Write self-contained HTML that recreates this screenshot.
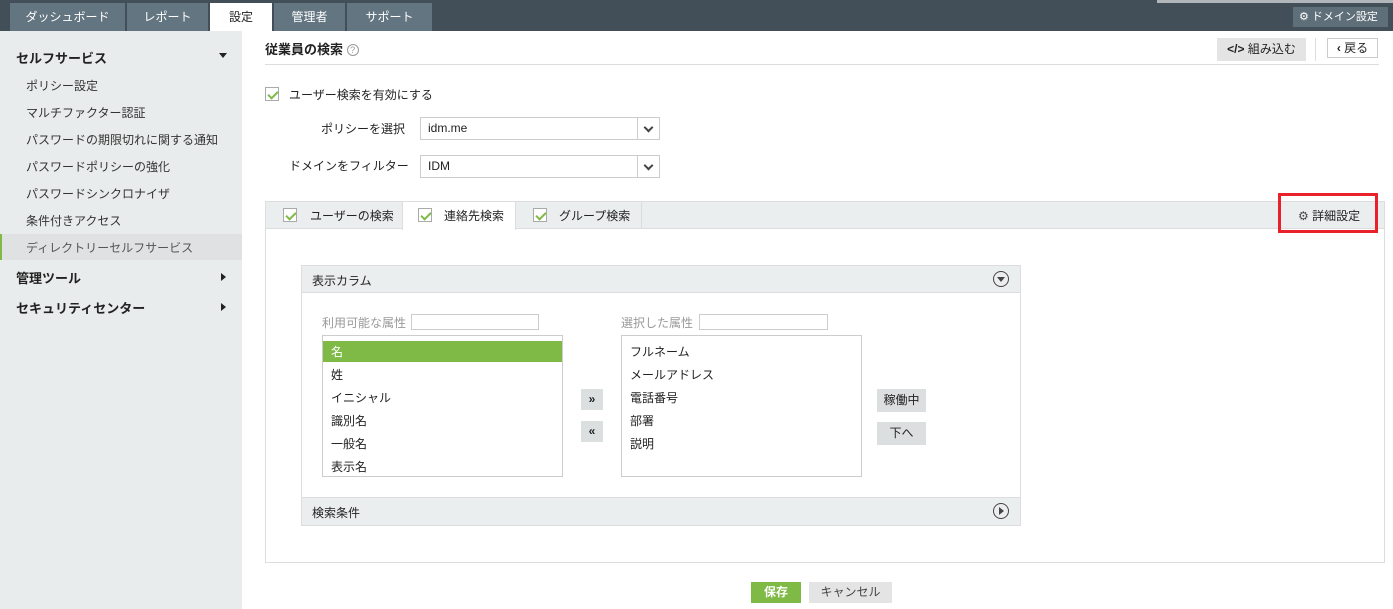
<!DOCTYPE html>
<html><head><meta charset="utf-8"><style>
*{box-sizing:border-box;margin:0;padding:0}
body{width:1393px;height:609px;position:relative;overflow:hidden;background:#fff;font-family:"Liberation Sans","Noto Sans CJK JP",sans-serif;font-size:12px;color:#222}
.a{position:absolute}
.tab{position:absolute;top:3px;height:28px;background:#627580;color:#fff;font-size:12px;line-height:28px;text-align:center}
.side{position:absolute;left:26px;font-size:12px;color:#333}
.cb{position:absolute;width:14px;height:14px;border:1px solid #aaa;background:#fff}
.cb:after{content:"";position:absolute;left:4px;top:1px;width:4px;height:8px;border:solid #7fba47;border-width:0 2px 2px 0;transform:rotate(45deg)}
.sel{position:absolute;height:23px;border:1px solid #ccc;background:#fff;padding-left:7px;line-height:21px;font-size:12px}
.sel .ar{position:absolute;right:0;top:0;width:22px;height:21px;border-left:1px solid #ccc}
.sel .ar:after{content:"";position:absolute;left:7px;top:6px;width:5px;height:5px;border:solid #444;border-width:0 2px 2px 0;transform:rotate(45deg)}
.li{position:absolute;left:8px;font-size:12px;color:#222}
.btn{position:absolute;background:#dcdfe0;text-align:center;font-size:12px}
</style></head><body>
<div class="a" style="left:0;top:0;width:1393px;height:31px;background:#434f58"></div>
<div class="a" style="left:1157px;top:0;width:236px;height:3px;background:#b0b6ba"></div>
<div class="tab" style="left:10px;width:115px">ダッシュボード</div>
<div class="tab" style="left:127px;width:81px">レポート</div>
<div class="tab" style="left:210px;width:62px;background:#fff;color:#222">設定</div>
<div class="tab" style="left:274px;width:71px">管理者</div>
<div class="tab" style="left:347px;width:85px">サポート</div>
<div class="a" style="left:1293px;top:7px;width:95px;height:20px;background:#5f6f79;color:#fff;font-size:11px;line-height:20px;padding-left:6px">⚙ ドメイン設定</div>

<div class="a" style="left:0;top:31px;width:242px;height:578px;background:#e9ecec"></div>
<div class="a" style="left:16px;top:48px;font-weight:bold;font-size:13px">セルフサービス</div>
<div class="a" style="left:219px;top:53px;border:4px solid transparent;border-top:5px solid #222;border-bottom:0"></div>
<div class="side" style="top:77px">ポリシー設定</div>
<div class="side" style="top:104px">マルチファクター認証</div>
<div class="side" style="top:131px">パスワードの期限切れに関する通知</div>
<div class="side" style="top:158px">パスワードポリシーの強化</div>
<div class="side" style="top:185px">パスワードシンクロナイザ</div>
<div class="side" style="top:212px">条件付きアクセス</div>
<div class="a" style="left:0;top:234px;width:242px;height:26px;background:#dfe1e2;border-left:2px solid #7fba47"></div>
<div class="side" style="top:239px;color:#555">ディレクトリーセルフサービス</div>
<div class="a" style="left:16px;top:268px;font-weight:bold;font-size:13px">管理ツール</div>
<div class="a" style="left:221px;top:273px;border:4px solid transparent;border-left:5px solid #222;border-right:0"></div>
<div class="a" style="left:16px;top:298px;font-weight:bold;font-size:13px">セキュリティセンター</div>
<div class="a" style="left:221px;top:303px;border:4px solid transparent;border-left:5px solid #222;border-right:0"></div>

<div class="a" style="left:265px;top:39px;font-weight:bold;font-size:13px">従業員の検索 <span style="display:inline-block;width:12px;height:12px;border:1px solid #999;border-radius:50%;font-size:9px;line-height:10px;text-align:center;color:#999;font-weight:normal;vertical-align:1px">?</span></div>
<div class="a" style="left:265px;top:64px;width:1114px;height:1px;background:#ddd"></div>
<div class="a" style="left:1217px;top:38px;width:89px;height:23px;background:#e4e4e4;line-height:23px;text-align:center;font-size:12px"><b>&lt;/&gt;</b> 組み込む</div>
<div class="a" style="left:1315px;top:38px;width:1px;height:23px;background:#ddd"></div>
<div class="a" style="left:1327px;top:38px;width:51px;height:20px;border:1px solid #ccc;line-height:18px;text-align:center;font-size:12px"><b>‹</b> 戻る</div>

<div class="cb" style="left:265px;top:87px"></div>
<div class="a" style="left:289px;top:86px">ユーザー検索を有効にする</div>
<div class="a" style="left:321px;top:120px">ポリシーを選択</div>
<div class="sel" style="left:420px;top:117px;width:240px">idm.me<div class="ar"></div></div>
<div class="a" style="left:289px;top:157px">ドメインをフィルター</div>
<div class="sel" style="left:420px;top:155px;width:240px">IDM<div class="ar"></div></div>

<div class="a" style="left:265px;top:201px;width:1120px;height:362px;border:1px solid #ddd"></div>
<div class="a" style="left:266px;top:202px;width:1118px;height:27px;background:#ebeeef;border-bottom:1px solid #ddd"></div>
<div class="cb" style="left:283px;top:208px"></div><div class="a" style="left:310px;top:207px">ユーザーの検索</div>
<div class="a" style="left:402px;top:202px;width:114px;height:28px;background:#fff;border-left:1px solid #ddd;border-right:1px solid #ddd"></div>
<div class="cb" style="left:418px;top:208px"></div><div class="a" style="left:444px;top:207px">連絡先検索</div>
<div class="a" style="left:641px;top:202px;width:1px;height:27px;background:#ddd"></div>
<div class="cb" style="left:533px;top:208px"></div><div class="a" style="left:559px;top:207px">グループ検索</div>
<div class="a" style="left:1298px;top:207px;font-size:12px"><span style="color:#444">⚙</span> 詳細設定</div>
<div class="a" style="left:1278px;top:193px;width:100px;height:40px;border:3px solid #e8212a"></div>

<div class="a" style="left:301px;top:265px;width:720px;height:261px;border:1px solid #ddd"></div>
<div class="a" style="left:302px;top:266px;width:718px;height:27px;background:#ebeeef;border-bottom:1px solid #ddd"></div>
<div class="a" style="left:312px;top:272px">表示カラム</div>
<div class="a" style="left:993px;top:271px;width:16px;height:16px;border:1.5px solid #444;border-radius:50%"><div class="a" style="left:3px;top:5px;border:4px solid transparent;border-top:5px solid #444;border-bottom:0"></div></div>
<div class="a" style="left:302px;top:497px;width:718px;height:28px;background:#ebeeef;border-top:1px solid #ddd"></div>
<div class="a" style="left:312px;top:504px">検索条件</div>
<div class="a" style="left:993px;top:503px;width:16px;height:16px;border:1.5px solid #444;border-radius:50%"><div class="a" style="left:5px;top:3px;border:4px solid transparent;border-left:5px solid #444;border-right:0"></div></div>

<div class="a" style="left:322px;top:314px;color:#999">利用可能な属性</div>
<div class="a" style="left:411px;top:314px;width:128px;height:16px;border:1px solid #ccc"></div>
<div class="a" style="left:322px;top:335px;width:241px;height:142px;border:1px solid #ccc">
<div class="a" style="left:0;top:5px;width:239px;height:21px;background:#7fba47"></div>
<div class="li" style="top:7px;color:#fff">名</div>
<div class="li" style="top:30px">姓</div>
<div class="li" style="top:53px">イニシャル</div>
<div class="li" style="top:76px">識別名</div>
<div class="li" style="top:99px">一般名</div>
<div class="li" style="top:122px">表示名</div>
</div>
<div class="btn" style="left:581px;top:389px;width:22px;height:21px;line-height:20px;font-weight:bold">»</div>
<div class="btn" style="left:581px;top:421px;width:22px;height:21px;line-height:20px;font-weight:bold">«</div>
<div class="a" style="left:621px;top:314px;color:#999">選択した属性</div>
<div class="a" style="left:699px;top:314px;width:129px;height:16px;border:1px solid #ccc"></div>
<div class="a" style="left:621px;top:335px;width:241px;height:142px;border:1px solid #ccc">
<div class="li" style="top:7px">フルネーム</div>
<div class="li" style="top:30px">メールアドレス</div>
<div class="li" style="top:53px">電話番号</div>
<div class="li" style="top:76px">部署</div>
<div class="li" style="top:99px">説明</div>
</div>
<div class="btn" style="left:877px;top:389px;width:49px;height:23px;line-height:23px">稼働中</div>
<div class="btn" style="left:877px;top:422px;width:49px;height:23px;line-height:23px">下へ</div>

<div class="a" style="left:751px;top:582px;width:50px;height:21px;background:#7fba47;color:#fff;font-weight:bold;text-align:center;line-height:21px">保存</div>
<div class="a" style="left:809px;top:582px;width:83px;height:21px;background:#e4e4e4;color:#444;text-align:center;line-height:21px">キャンセル</div>
</body></html>
